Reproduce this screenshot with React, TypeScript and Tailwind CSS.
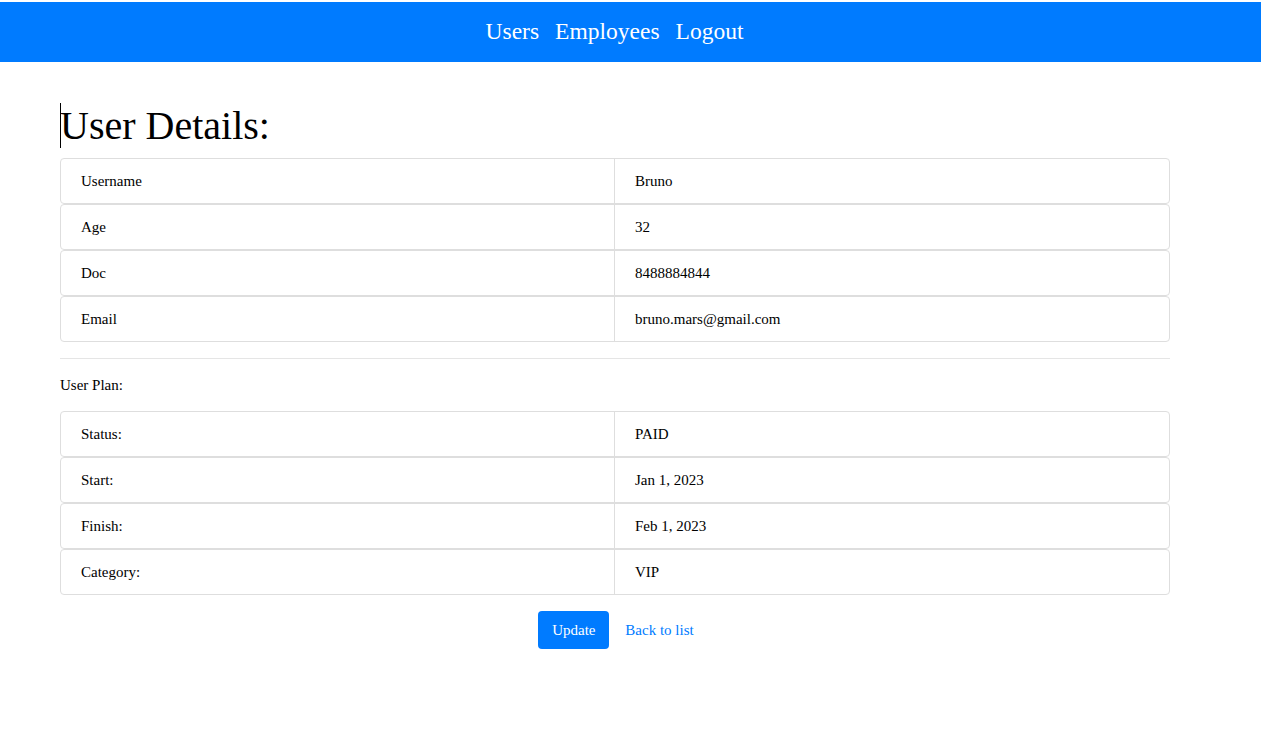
import React from "react";

const details: [string, string][] = [
  ["Username", "Bruno"],
  ["Age", "32"],
  ["Doc", "8488884844"],
  ["Email", "bruno.mars@gmail.com"],
];

const plan: [string, string][] = [
  ["Status:", "PAID"],
  ["Start:", "Jan 1, 2023"],
  ["Finish:", "Feb 1, 2023"],
  ["Category:", "VIP"],
];

function InfoTable({ rows }: { rows: [string, string][] }) {
  return (
    <div>
      {rows.map(([label, value]) => (
        <div
          key={label}
          className="grid grid-cols-[553px_1fr] h-[46px] border border-[#dedede] rounded-[4px] text-[15px] text-black"
        >
          <div className="flex items-center pl-[20px]">{label}</div>
          <div className="flex items-center pl-[20px] border-l border-[#dedede]">{value}</div>
        </div>
      ))}
    </div>
  );
}

export default function App() {
  return (
    <div className="min-h-screen bg-white font-['Liberation_Serif',serif] text-black">
      <div className="h-[2px] bg-white" />
      <nav className="h-[60px] bg-[#007bff]">
        <div className="w-[1229px] h-full flex items-center justify-center gap-[16px] text-[23.5px] text-white">
          <a href="#">Users</a>
          <a href="#">Employees</a>
          <a href="#">Logout</a>
        </div>
      </nav>

      <div className="w-[1110px] ml-[60px] pt-[41px]">
        <div className="relative">
          <span className="absolute left-0 top-0 w-px h-[45px] bg-black" />
          <h1 className="text-[40px] leading-[45px] font-normal">User Details:</h1>
        </div>

        <div className="mt-[10px]">
          <InfoTable rows={details} />
        </div>

        <hr className="mt-[16px] border-t border-[#e5e5e5]" />

        <div className="h-[52px] flex items-center text-[15px]">User Plan:</div>

        <InfoTable rows={plan} />

        <div className="mt-[16px] pl-[2px] flex justify-center items-center gap-[16px] text-[15px]">
          <button className="h-[38px] w-[71px] rounded-[4px] bg-[#007bff] text-white flex items-center justify-center">
            Update
          </button>
          <a href="#" className="text-[#007bff]">
            Back to list
          </a>
        </div>
      </div>
    </div>
  );
}
